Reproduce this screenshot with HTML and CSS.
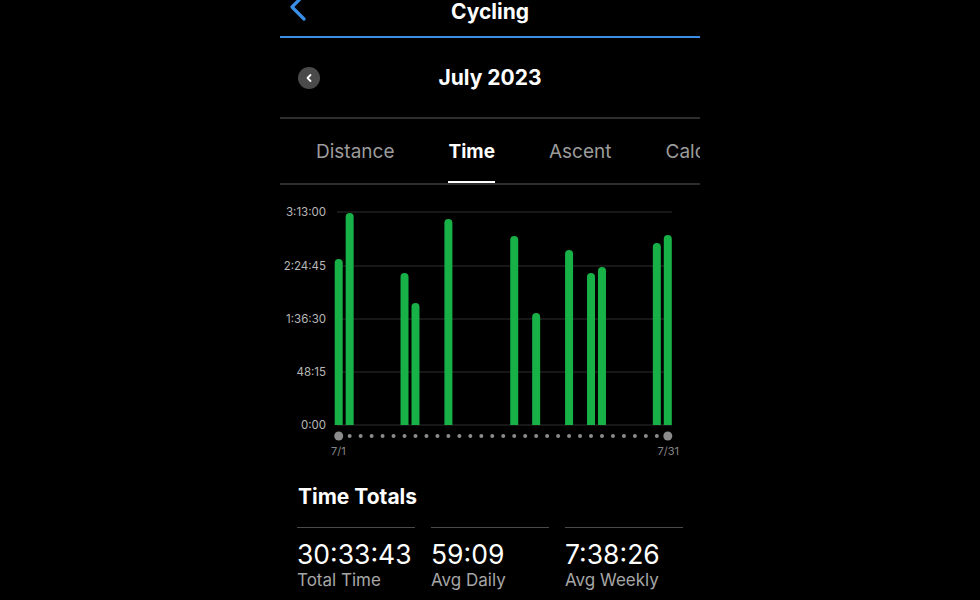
FILE: index.html
```html
<!DOCTYPE html>
<html lang="en">
<head>
    <meta charset="UTF-8">
    <title>Cycling - July 2023</title>
    <link rel="stylesheet" href="styles.css">
</head>
<body>
    <div class="phone">
        <div class="nav">
            <a class="back" href="#">
                <svg width="18" height="30" viewBox="0 0 18 30"><path d="M15 1 L3 13 L15 25" fill="none" stroke="#3a8ee6" stroke-width="3.2" stroke-linecap="round" stroke-linejoin="round"/></svg>
            </a>
            <h1>Cycling</h1>
            <span></span>
        </div>

        <div class="month">
            <button class="prev">
                <svg width="10" height="10" viewBox="0 0 10 10"><path d="M6.5 2 L3.5 5 L6.5 8" fill="none" stroke="#fff" stroke-width="1.8" stroke-linecap="round" stroke-linejoin="round"/></svg>
            </button>
            <h2>July 2023</h2>
            <span></span>
        </div>

        <div class="tabs">
            <div class="tab">Distance</div>
            <div class="tab active">Time</div>
            <div class="tab">Ascent</div>
            <div class="tab">Calories</div>
        </div>

        <div class="chart">
            <svg width="420" height="280" viewBox="0 0 420 280">
                <g class="grid">
                    <line x1="57" y1="27" x2="392" y2="27"/>
                    <line x1="57" y1="81" x2="392" y2="81"/>
                    <line x1="57" y1="134" x2="392" y2="134"/>
                    <line x1="57" y1="187" x2="392" y2="187"/>
                    <line x1="57" y1="240" x2="392" y2="240"/>
                </g>
                <g class="ylabels">
                    <text x="46" y="31">3:13:00</text>
                    <text x="46" y="85">2:24:45</text>
                    <text x="46" y="138">1:36:30</text>
                    <text x="46" y="191">48:15</text>
                    <text x="46" y="244">0:00</text>
                </g>
                <g id="bars" class="bars"></g>
                <g id="dots" class="dots"></g>
                <text class="xlabel" x="51" y="270">7/1</text>
                <text class="xlabel end" x="399" y="270">7/31</text>
            </svg>
        </div>

        <div class="totals">
            <h3>Time Totals</h3>
            <div class="stats">
                <div class="stat">
                    <div class="value">30:33:43</div>
                    <div class="label">Total Time</div>
                </div>
                <div class="stat">
                    <div class="value">59:09</div>
                    <div class="label">Avg Daily</div>
                </div>
                <div class="stat">
                    <div class="value">7:38:26</div>
                    <div class="label">Avg Weekly</div>
                </div>
            </div>
        </div>
    </div>
    <script>
    // day -> top of bar (chart px)
    const rides = {1: 74, 2: 28, 7: 88, 8: 118, 11: 34, 17: 51, 19: 128, 22: 65, 24: 88, 25: 82, 30: 58, 31: 50};
    const base = 240;
    const ns = 'http://www.w3.org/2000/svg';
    const dayX = d => 58.7 + (d - 1) * 10.97;

    const bars = document.getElementById('bars');
    Object.keys(rides).forEach(d => {
        const x = dayX(+d), top = rides[d];
        const p = document.createElementNS(ns, 'path');
        p.setAttribute('d', `M${x - 4} ${base} V${top + 4} A4 4 0 0 1 ${x + 4} ${top + 4} V${base} Z`);
        bars.appendChild(p);
    });

    const dots = document.getElementById('dots');
    for (let d = 1; d <= 31; d++) {
        const c = document.createElementNS(ns, 'circle');
        c.setAttribute('cx', dayX(d));
        c.setAttribute('cy', 251);
        c.setAttribute('r', (d === 1 || d === 31) ? 4.5 : 2);
        dots.appendChild(c);
    }
    </script>
</body>
</html>
```

FILE: styles.css
```css
body { margin: 0; background: #000; font-family: Inter, "Noto Sans", sans-serif; color: #fff; }
.phone { width: 420px; margin: 0 auto; }

.nav { display: grid; grid-template-columns: 1fr auto 1fr; align-items: center; height: 36px; border-bottom: 2px solid #3a8ee6; }
.nav h1 { margin: 0; font-size: 21px; font-weight: 700; line-height: 24px; position: relative; top: -6px; }
.back { display: block; margin-left: 9px; height: 30px; position: relative; top: -9px; }

.month { display: grid; grid-template-columns: 1fr auto 1fr; align-items: center; height: 79px; border-bottom: 2px solid #2e2e2e; }
.month h2 { margin: 0; font-size: 21px; font-weight: 700; }
.prev { width: 22px; height: 22px; margin-left: 18px; border: none; border-radius: 50%; background: #4a4a4a; padding: 0; display: flex; align-items: center; justify-content: center; }

.tabs { display: flex; gap: 54px; padding-left: 36px; height: 64px; border-bottom: 2px solid #2e2e2e; overflow: hidden; white-space: nowrap; }
.tab { font-size: 19px; color: #9c9c9c; line-height: 66px; }
.tab.active { color: #fff; font-weight: 700; box-shadow: inset 0 -2px 0 #fff; }

.chart { height: 280px; }
.chart svg { display: block; }
.grid line { stroke: #2f2f2f; stroke-width: 1; }
.ylabels text { font-size: 11.5px; fill: #b8b8b8; text-anchor: end; }
.bars path { fill: #17b147; }
.dots circle { fill: #8c8c8c; }
.xlabel { font-size: 11px; fill: #858585; }
.xlabel.end { text-anchor: end; }

.totals { padding: 17px 17px 0; }
.totals h3 { margin: 0 0 0 1px; font-size: 21px; font-weight: 700; line-height: 30px; }
.stats { display: flex; gap: 16px; margin-top: 15px; }
.stat { flex: 1; border-top: 1.5px solid #4a4a4a; padding-top: 11px; }
.value { font-size: 26.5px; line-height: 30px; }
.label { font-size: 17px; color: #a6a6a6; line-height: 22px; }
```
